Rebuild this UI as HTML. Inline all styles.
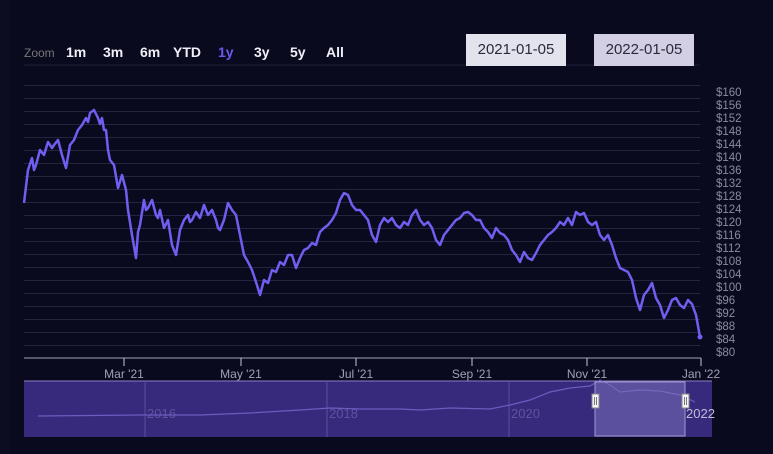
<!DOCTYPE html>
<html><head><meta charset="utf-8"><style>
html,body{margin:0;padding:0;background:#0a0a1e;}
body{width:773px;height:454px;overflow:hidden;position:relative;font-family:"Liberation Sans",sans-serif;}
.btn{position:absolute;top:34px;height:32px;width:100px;font-size:15px;color:#2a2a3a;text-align:center;line-height:32px;}
</style></head><body>
<div style="position:absolute;left:0;top:0;width:10px;height:454px;background:#0d0d22"></div>
<svg width="773" height="454" style="position:absolute;left:0;top:0" font-family="Liberation Sans, sans-serif">
<g font-size="14" font-weight="bold" fill="#f0f0f8">
<text x="24" y="57" font-weight="normal" fill="#777" font-size="12">Zoom</text>
<text x="66" y="57">1m</text><text x="103" y="57">3m</text><text x="140" y="57">6m</text><text x="173" y="57">YTD</text>
<text x="218" y="57" fill="#6a5af0">1y</text><text x="254" y="57">3y</text><text x="290" y="57">5y</text><text x="326" y="57">All</text>
</g>
<line x1="24" y1="65" x2="700" y2="65" stroke="#1e1e38"/>
<g stroke="#24243f" stroke-width="1" id="grid"></g>
<g font-size="11.5" fill="#8a8aa0" id="ylab"></g>
<line x1="24" y1="358" x2="701" y2="358" stroke="#a0a0b8"/>
<g stroke="#c8c8d8"><line x1="124" y1="358" x2="124" y2="366"/><line x1="241" y1="358" x2="241" y2="366"/><line x1="356" y1="358" x2="356" y2="366"/><line x1="472" y1="358" x2="472" y2="366"/><line x1="587" y1="358" x2="587" y2="366"/><line x1="701" y1="358" x2="701" y2="366"/></g>
<g font-size="12" fill="#a0a0b8" text-anchor="middle"><text x="124" y="378">Mar '21</text><text x="241" y="378">May '21</text><text x="356" y="378">Jul '21</text><text x="472" y="378">Sep '21</text><text x="587" y="378">Nov '21</text><text x="701" y="378">Jan '22</text></g>
<rect x="24" y="381" width="688" height="56" fill="#372a7d"/>
<line x1="24" y1="381" x2="712" y2="381" stroke="#8a80c8"/>
<g stroke="#5a4e9a"><line x1="145" y1="381" x2="145" y2="437"/><line x1="327" y1="381" x2="327" y2="437"/><line x1="509" y1="381" x2="509" y2="437"/></g>
<g font-size="13" fill="#5e52a0"><text x="147" y="418">2016</text><text x="329" y="418">2018</text><text x="511" y="418">2020</text></g>
<polyline fill="none" stroke="#6c5cc0" stroke-width="1.2" points="38,416 140,415 200,415 250,413 300,410 330,408 360,409 400,409 420,410 450,408 490,409 510,405 530,400 550,392 570,388 590,386 600,380 610,385 620,392 640,390 660,391 680,395 695,402"/>
<rect x="595" y="382" width="90" height="54" fill="#7a70b8" fill-opacity="0.55" stroke="#a098d0"/>
<text x="686" y="418" font-size="13" fill="#c0bcd8">2022</text>
<g fill="#f4f4f8" stroke="#888"><rect x="592" y="394" width="7" height="14"/><rect x="682" y="394" width="7" height="14"/></g>
<g stroke="#777"><line x1="594.5" y1="397" x2="594.5" y2="405"/><line x1="596.5" y1="397" x2="596.5" y2="405"/><line x1="684.5" y1="397" x2="684.5" y2="405"/><line x1="686.5" y1="397" x2="686.5" y2="405"/></g>
<polyline fill="none" stroke="#6f5ff0" stroke-width="2.5" stroke-linejoin="round" points="24,203 28,170 32,158 34,170 36,165 40,150 44,155 48,142 52,148 54,145 58,140 62,155 66,168 70,145 74,140 78,130 82,125 86,118 88,122 90,113 94,110 98,118 100,124 102,118 104,130 106,130 108,150 110,160 114,165 118,188 122,175 126,190 128,210 132,235 136,258 138,232 140,225 144,200 146,210 148,208 152,200 156,215 158,218 160,210 164,228 168,220 172,245 176,255 180,230 184,220 188,215 190,222 192,220 196,212 200,218 204,205 208,215 212,210 216,220 218,228 220,230 224,220 228,203 232,210 236,215 240,235 244,255 248,262 252,270 256,282 260,295 264,280 268,283 272,270 276,272 280,262 284,265 288,255 292,255 296,268 300,258 304,250 308,248 312,243 316,245 318,238 320,232 324,228 328,225 332,220 336,213 340,200 344,193 348,195 352,205 356,210 360,210 364,215 368,220 372,235 376,242 380,225 384,218 388,222 392,218 396,225 400,228 404,222 408,225 412,215 416,210 420,220 424,225 428,222 432,228 436,240 440,245 444,235 448,230 452,225 456,220 460,218 464,213 468,212 472,215 476,220 480,220 484,228 488,232 492,238 496,228 500,233 504,235 508,240 512,250 516,255 520,262 524,252 528,258 532,260 536,253 540,245 544,240 548,235 552,232 556,228 560,222 564,225 568,218 572,225 576,212 580,215 584,213 588,222 592,225 596,222 600,235 604,240 608,235 612,245 616,258 620,268 624,270 628,272 632,280 636,298 640,310 644,295 648,290 652,283 656,298 660,305 664,318 668,310 672,300 676,298 680,305 684,308 688,300 692,304 696,315 700,337"/>
<circle cx="700" cy="337" r="2.5" fill="#6f5ff0"/>
</svg>
<div class="btn" style="left:466px;background:#e2e3ec">2021-01-05</div>
<div class="btn" style="left:594px;background:#d2cee4">2022-01-05</div>
<script>
var g=document.getElementById('grid'),l=document.getElementById('ylab'),ns='http://www.w3.org/2000/svg';
for(var i=0;i<=20;i++){var y=85+13*i;var ln=document.createElementNS(ns,'line');ln.setAttribute('x1',24);ln.setAttribute('x2',700);ln.setAttribute('y1',y+0.5);ln.setAttribute('y2',y+0.5);g.appendChild(ln);
var t=document.createElementNS(ns,'text');t.setAttribute('x',716);t.setAttribute('y',y+11);t.textContent='$'+(160-4*i);l.appendChild(t);}
</script>
</body></html>
